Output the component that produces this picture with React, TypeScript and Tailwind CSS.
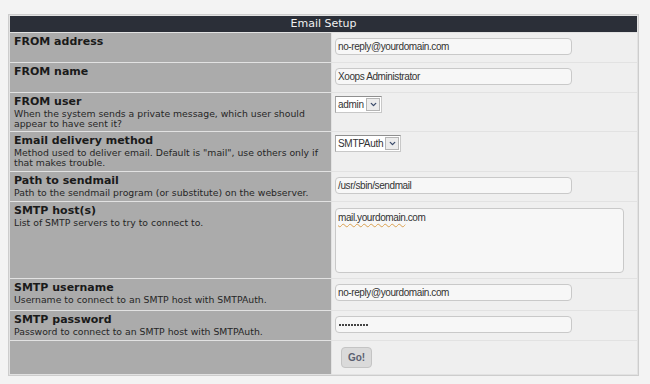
import { ChevronDown } from "lucide-react"

type Row = {
  title: string
  desc?: string
  h: string
  field: "input" | "select" | "textarea" | "password" | "button"
  value?: string
  selectW?: string
}

const rows: Row[] = [
  { title: "FROM address", h: "h-[29px]", field: "input", value: "no-reply@yourdomain.com" },
  { title: "FROM name", h: "h-[29px]", field: "input", value: "Xoops Administrator" },
  {
    title: "FROM user",
    desc: "When the system sends a private message, which user should appear to have sent it?",
    h: "h-[38px]",
    field: "select",
    value: "admin",
    selectW: "w-[47px]",
  },
  {
    title: "Email delivery method",
    desc: 'Method used to deliver email. Default is "mail", use others only if that makes trouble.',
    h: "h-[39px]",
    field: "select",
    value: "SMTPAuth",
    selectW: "w-[66px]",
  },
  {
    title: "Path to sendmail",
    desc: "Path to the sendmail program (or substitute) on the webserver.",
    h: "h-[29px]",
    field: "input",
    value: "/usr/sbin/sendmail",
  },
  { title: "SMTP host(s)", desc: "List of SMTP servers to try to connect to.", h: "h-[76px]", field: "textarea" },
  {
    title: "SMTP username",
    desc: "Username to connect to an SMTP host with SMTPAuth.",
    h: "h-[31px]",
    field: "input",
    value: "no-reply@yourdomain.com",
  },
  {
    title: "SMTP password",
    desc: "Password to connect to an SMTP host with SMTPAuth.",
    h: "h-[29px]",
    field: "password",
  },
  { title: "", h: "h-[33px]", field: "button" },
]

function Field({ row }: { row: Row }) {
  if (row.field === "input") {
    return (
      <div className="mt-[5px] h-[17px] w-[237px] rounded-[4px] border border-[#c9c9c9] bg-[#f7f7f7] px-[2px] text-[10px] leading-[15px] tracking-[-0.4px] text-[#333]">
        {row.value}
      </div>
    )
  }
  if (row.field === "password") {
    return (
      <div className="mt-[5px] flex h-[17px] w-[237px] items-center gap-px rounded-[4px] border border-[#c9c9c9] bg-[#f7f7f7] px-[3px]">
        {Array.from({ length: 10 }).map((_, i) => (
          <span key={i} className="h-[2px] w-[2px] bg-[#444]" />
        ))}
      </div>
    )
  }
  if (row.field === "select") {
    return (
      <div className={`mt-[3px] flex h-[17px] ${row.selectW} items-stretch border border-[#c8c8c8] border-t-[#8f8f8f] border-l-[#a8a8a8] bg-white text-[10px] tracking-[-0.3px] text-[#333]`}>
        <span className="flex-1 pl-[2px] leading-[15px]">{row.value}</span>
        <span className="my-[1px] mr-[1px] flex w-[14px] items-center justify-center border border-[#b5b5b5] bg-[#ececec]">
          <ChevronDown className="h-[9px] w-[9px] text-[#3a4a6a]" strokeWidth={3.5} />
        </span>
      </div>
    )
  }
  if (row.field === "textarea") {
    return (
      <div className="mt-[6px] h-[65px] w-[289px] rounded-[4px] border border-[#c9c9c9] bg-[#f7f7f7] px-[2px] pt-[2px] text-[10px] leading-[13px] tracking-[-0.4px] text-[#333]">
        <span className="underline decoration-wavy decoration-[#d9a050] decoration-1 underline-offset-2">mail.yourdomain</span>
        .com
      </div>
    )
  }
  return (
    <div className="ml-[6px] mt-[6px] flex h-[21px] w-[31px] items-center justify-center rounded-[4px] border border-[#c4c4c4] bg-[#dadada] text-[10px] font-bold text-[#5a6070]">
      Go!
    </div>
  )
}

export default function App() {
  return (
    <div className="min-h-[384px] bg-[#f3f3f3] pl-[8px] pt-[14px]" style={{ fontFamily: '"DejaVu Sans", Verdana, sans-serif' }}>
      <div className="flex w-[631px] flex-col gap-px border border-[#cdcdcd] bg-[#e2e2e2] p-px">
        {/* Header */}
        <div className="h-[16px] bg-[#2b2f38] text-center text-[11px] leading-[16px] text-[#f0f0f0]">Email Setup</div>

        {rows.map((row, i) => (
          <div key={i} className={`flex gap-px ${row.h}`}>
            <div className="w-[321px] bg-[#ababab] px-[4px] pt-[2px] text-[#1a1a1a]">
              {row.title && <div className="text-[11px] font-bold leading-[13px]">{row.title}</div>}
              {row.desc && <div className="mt-[1px] text-[9.3px] leading-[10px] text-[#262626]">{row.desc}</div>}
            </div>
            <div className="flex-1 bg-[#efefef] pl-[3px]" style={{ fontFamily: '"Liberation Sans", Arial, sans-serif' }}>
              <Field row={row} />
            </div>
          </div>
        ))}
      </div>
    </div>
  )
}
